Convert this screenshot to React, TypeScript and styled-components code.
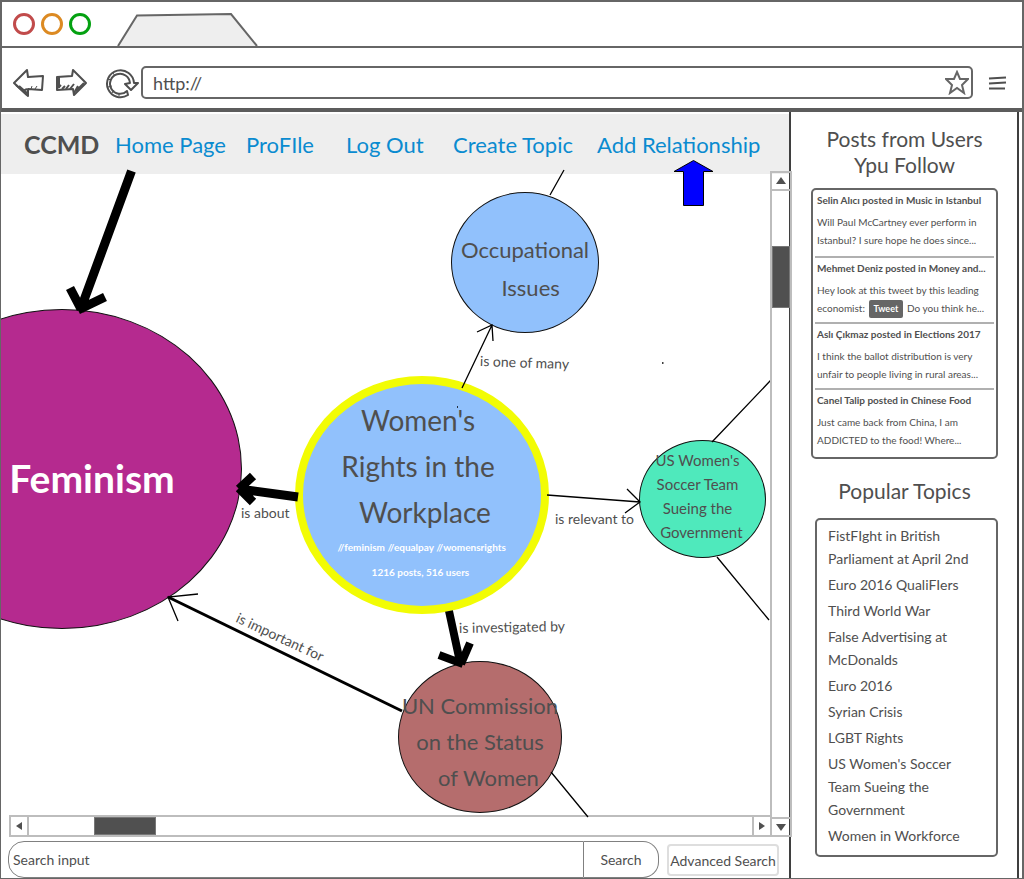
import React from "react";
import styled, { createGlobalStyle } from "styled-components";

const ink = "#4f4f4f";
const frame = "#666666";
const light = "#bdbdbd";
const face = "Lato, sans-serif";

const GlobalStyle = createGlobalStyle`
  *, *::before, *::after { box-sizing: border-box; }
  body { margin: 0; background: #fff; color: ${ink}; font-family: ${face}; }
  button, input { font: inherit; color: inherit; background: none; border: 0; padding: 0; margin: 0; outline: 0; }
  h1, h2, h3, p, ul { margin: 0; padding: 0; }
  ul { list-style: none; }
`;

const Window = styled.div`
  display: flex;
  flex-direction: column;
  min-height: 100vh;
  border: 2px solid ${frame};
  border-left-width: 1px;
  border-bottom-width: 1px;
`;

const TabStrip = styled.div`
  display: flex;
  align-items: center;
  height: 46px;
  padding-left: 11px;
  border-bottom: 2px solid ${frame};
  border-left: 1px solid ${frame};
`;

const Lights = styled.div`
  display: flex;
  gap: 6px;
`;

const Light = styled.button<{ $color: string }>`
  width: 22px;
  height: 22px;
  border: 3px solid ${(p) => p.$color};
  border-radius: 50%;
`;

const TabShape = styled.svg`
  display: block;
  align-self: flex-end;
  margin-left: 26px;
`;

const Toolbar = styled.div`
  display: flex;
  align-items: center;
  height: 64px;
  padding: 9px 15px 0 11px;
  border-bottom: 4px solid #5c5c5c;
  border-left: 1px solid ${frame};
`;

const IconButton = styled.button<{ $gap?: number }>`
  display: flex;
  margin-right: ${(p) => p.$gap ?? 0}px;
`;

const AddressBox = styled.div`
  display: flex;
  flex: 1;
  align-items: center;
  height: 33px;
  margin-right: 15px;
  padding: 0 2px 0 10px;
  border: 2px solid ${frame};
  border-radius: 5px;
`;

const AddressInput = styled.input`
  flex: 1;
  min-width: 0;
  font-size: 18px;
`;

const Body = styled.div`
  display: grid;
  flex: 1;
  grid-template-columns: minmax(0, 1fr) 230px;
  padding-right: 3px;
`;

const Main = styled.main`
  display: flex;
  flex-direction: column;
  min-width: 0;
  padding-top: 2px;
`;

const Nav = styled.nav`
  display: grid;
  grid-template-columns: 91px 131px 100px 107px 144px 1fr;
  align-items: center;
  height: 60px;
  padding-left: 23px;
  background: #eeeeee;
  white-space: nowrap;
`;

const Brand = styled.h1`
  font-size: 25px;
  font-weight: 700;
`;

const NavLink = styled.a`
  color: #0a8bd0;
  font-size: 22px;
  text-decoration: none;
`;

const Viewport = styled.div`
  display: grid;
  flex: 1;
  grid-template-columns: minmax(0, 1fr) 19px;
  grid-template-rows: minmax(641px, 1fr) 22px;
`;

const Canvas = styled.div`
  position: relative;
  overflow-x: clip;
`;

const Edges = styled.svg`
  position: absolute;
  top: 0;
  left: 0;
  overflow: visible;
  pointer-events: none;
`;

const Node = styled.div<{
  $x: number;
  $y: number;
  $w: number;
  $h: number;
  $fill: string;
  $ring?: string;
  $inset?: string;
}>`
  position: absolute;
  left: ${(p) => p.$x}px;
  top: ${(p) => p.$y}px;
  display: flex;
  flex-direction: column;
  align-items: center;
  justify-content: center;
  width: ${(p) => p.$w}px;
  height: ${(p) => p.$h}px;
  padding: ${(p) => p.$inset ?? "0"};
  border: ${(p) => p.$ring ?? "1px solid #111"};
  border-radius: 50%;
  background: ${(p) => p.$fill};
  white-space: pre;
`;

const NodeText = styled.p<{ $size: number; $line: number }>`
  font-size: ${(p) => p.$size}px;
  line-height: ${(p) => p.$line}px;
`;

const NodeTitle = styled(NodeText)`
  color: #fff;
  font-weight: 700;
`;

const NodeMeta = styled.p`
  color: #fff;
  font-size: 10px;
  font-weight: 700;
  line-height: 25px;
`;

const EdgeLabel = styled.span<{ $x: number; $y: number; $turn?: number }>`
  position: absolute;
  left: ${(p) => p.$x}px;
  top: ${(p) => p.$y}px;
  font-size: 14px;
  line-height: 20px;
  white-space: nowrap;
  transform: rotate(${(p) => p.$turn ?? 0}deg);
  transform-origin: left center;
`;

const HBar = styled.div`
  display: flex;
  margin-left: 8px;
  border: 2px solid ${light};
  border-right: 0;
`;

const VBar = styled.div`
  z-index: 1;
  display: flex;
  grid-column: 2;
  grid-row: 1 / 3;
  flex-direction: column;
  margin: -3px -3px 0 0;
  border: 2px solid ${light};
`;

const BarButton = styled.button<{ $side: "left" | "right" | "top" | "bottom" }>`
  display: flex;
  flex: none;
  align-items: center;
  justify-content: center;
  width: 18px;
  height: 18px;
  border-${(p) => p.$side}: 2px solid ${light};
`;

const BarTrack = styled.div<{ $vertical?: boolean }>`
  display: flex;
  flex: 1;
  flex-direction: ${(p) => (p.$vertical ? "column" : "row")};
  padding: ${(p) => (p.$vertical ? "55px 0 0" : "0 0 0 65px")};
`;

const Thumb = styled.div`
  flex: 0 0 62px;
  background: #505050;
  border: 1px solid #777;
`;

const SearchForm = styled.form`
  display: flex;
  align-items: flex-start;
  height: 41px;
  padding: 4px 10px 0 7px;
  font-size: 14px;
`;

const SearchInput = styled.input`
  flex: 1;
  min-width: 0;
  height: 37px;
  padding-left: 4px;
  border: 1px solid #808080;
  border-radius: 16px 0 0 16px;
`;

const SearchButton = styled.button`
  width: 75px;
  height: 37px;
  margin-right: 8px;
  border: 1px solid #808080;
  border-left: 0;
  border-radius: 0 16px 16px 0;
`;

const AdvancedButton = styled.button`
  width: 112px;
  height: 32px;
  margin-top: 3px;
  border: 2px solid #dedede;
  border-radius: 4px;
  white-space: nowrap;
`;

const Sidebar = styled.aside`
  padding: 14px 19px 16px 20px;
  border: solid #3f3f3f;
  border-width: 0 2px;
`;

const SideTitle = styled.h2`
  font-size: 21px;
  font-weight: 400;
  line-height: 26px;
  text-align: center;
`;

const PostList = styled.div`
  margin: 10px 0 19px;
  padding: 0 2px 3px;
  border: 2px solid ${frame};
  border-radius: 5px;
`;

const Post = styled.article`
  height: 66px;
  padding-left: 2px;
  white-space: nowrap;
  & + & { border-top: 2px solid #b0b0b0; }
`;

const PostTitle = styled.h3`
  margin-bottom: 3px;
  font-size: 10px;
  line-height: 20px;
`;

const PostLine = styled.p`
  font-size: 10px;
  line-height: 18px;
`;

const TweetButton = styled.button`
  width: 34px;
  height: 18px;
  margin: 0 4px;
  border-radius: 2px;
  background: #666;
  color: #fff;
  font-size: 9px;
  font-weight: 700;
  line-height: 18px;
`;

const TopicList = styled.ul`
  display: flex;
  flex-direction: column;
  gap: 3px;
  margin: 14px 0 0 4px;
  padding: 4px 11px 8px;
  border: 2px solid ${frame};
  border-radius: 5px;
  font-size: 14px;
  line-height: 23px;
  white-space: pre-line;
`;

const links = ["Home Page", "ProFIle", "Log Out", "Create Topic", "Add Relationship"];

const topics = [
  "FistFIght in British\nParliament at April 2nd",
  "Euro 2016 QualiFIers",
  "Third World War",
  "False Advertising at\nMcDonalds",
  "Euro 2016",
  "Syrian Crisis",
  "LGBT Rights",
  "US Women's Soccer\nTeam Sueing the\nGovernment",
  "Women in Workforce",
];

const posts: { title: string; lines: React.ReactNode[] }[] = [
  {
    title: "Selin Alıcı posted in Music in Istanbul",
    lines: ["Will Paul McCartney ever perform in", "Istanbul? I sure hope he does since..."],
  },
  {
    title: "Mehmet Deniz posted in Money and...",
    lines: [
      "Hey look at this tweet by this leading",
      <>economist:<TweetButton type="button">Tweet</TweetButton>Do you think he...</>,
    ],
  },
  {
    title: "Aslı Çıkmaz posted in Elections 2017",
    lines: ["I think the ballot distribution is very", "unfair to people living in rural areas..."],
  },
  {
    title: "Canel Talip posted in Chinese Food",
    lines: ["Just came back from China, I am", "ADDICTED to the food! Where..."],
  },
];

const Triangle = ({ d }: { d: string }) => (
  <svg width="10" height="10" aria-hidden="true">
    <path d={d} fill="#505050" />
  </svg>
);

export default function App() {
  return (
    <>
      <GlobalStyle />
      <Window>
        <TabStrip>
          <Lights>
            <Light type="button" aria-label="Close" $color="#c14b4b" />
            <Light type="button" aria-label="Minimize" $color="#dc8a22" />
            <Light type="button" aria-label="Maximize" $color="#04a111" />
          </Lights>
          <TabShape width="142" height="33" aria-hidden="true">
            <path d="M1 33 L20 2.5 L114 1 L140 33" fill="#eee" stroke={frame} strokeWidth="2" />
          </TabShape>
        </TabStrip>
        <Toolbar>
          <IconButton type="button" aria-label="Back" $gap={11}>
            <svg width="32" height="30" fill="none" stroke={ink} strokeWidth="2" strokeLinejoin="round">
              <path d="M1 15 L14 2 L15 9 L30 8 L29 22 L15 21 L15 28 Z" />
              <path d="M3 17 L14 27 M6 18 L14 25 M10 23 L14 21" />
              <path d="M18 21 L19 18 M22 21 L24 18" strokeWidth="1" />
            </svg>
          </IconButton>
          <IconButton type="button" aria-label="Forward" $gap={17}>
            <svg width="32" height="30" fill="none" stroke={ink} strokeWidth="2" strokeLinejoin="round">
              <path d="M1 9 L16 8 L17 2 L30 15 L18 27 L17 21 L1 22 Z" />
              <path d="M3 9 V20 M2 20 L5 17 M6 21 L9 18 M10 21 L13 17 M14 21 L18 16 M18 25 L22 18 M20 23 L28 15" />
            </svg>
          </IconButton>
          <IconButton type="button" aria-label="Reload" $gap={2}>
            <svg width="34" height="32" fill="none" stroke={ink} strokeWidth="2" strokeLinejoin="round">
              <path d="M29 16 A13.5 13.5 0 1 0 23 28 L22 24 A10 10 0 1 1 25 16 L20 17 L26 23 L33 16 Z" />
              <path d="M3 12 L6 13 M3 20 L7 19 M7 26 L9 23 M14 29 V26 M8 6 L10 9" strokeWidth="1" />
            </svg>
          </IconButton>
          <AddressBox>
            <AddressInput aria-label="Address" defaultValue="http://" />
            <IconButton type="button" aria-label="Bookmark">
              <svg width="24" height="25" fill="none" stroke={frame} strokeWidth="2">
                <path d="M12 2 L15 9 L23 9 L17 15 L19 23 L12 18 L5 23 L7 15 L1 9 L9 9 Z" />
              </svg>
            </IconButton>
          </AddressBox>
          <IconButton type="button" aria-label="Menu">
            <svg width="19" height="14" stroke={ink} strokeWidth="2">
              <path d="M1 2.5 L18 1.5 M1 7.5 L18 6.5 M1 12.5 H17" />
            </svg>
          </IconButton>
        </Toolbar>
        <Body>
          <Main>
            <Nav>
              <Brand>CCMD</Brand>
              {links.map((l) => (
                <NavLink key={l} href="#">{l}</NavLink>
              ))}
            </Nav>
            <Viewport>
              <Canvas>
                <Node $x={-119} $y={135} $w={360} $h={320} $fill="#b52a8f" $inset="18px 0 0 60px">
                  <NodeTitle $size={39} $line={46}>Feminism</NodeTitle>
                </Node>
                <Node $x={450} $y={18} $w={148} $h={141} $fill="#91c1fc" $inset="12px 0 0">
                  <NodeText $size={22} $line={38}>Occupational</NodeText>
                  <NodeText $size={22} $line={38}>{"  Issues"}</NodeText>
                </Node>
                <Node $x={294} $y={202} $w={254} $h={238} $fill="#91c1fc" $ring="8px solid #f2fc04" $inset="0 8px 8px 0">
                  <NodeText $size={28} $line={46}>Women's</NodeText>
                  <NodeText $size={28} $line={46}>Rights in the</NodeText>
                  <NodeText $size={28} $line={46}>{"  Workplace"}</NodeText>
                  <NodeMeta>{"   //feminism //equalpay //womensrights"}</NodeMeta>
                  <NodeMeta>{"  1216 posts, 516 users"}</NodeMeta>
                </Node>
                <Node $x={638} $y={266} $w={127} $h={118} $fill="#4fe9bc" $inset="0 10px 6px 0">
                  <NodeText $size={15} $line={24}>US Women's</NodeText>
                  <NodeText $size={15} $line={24}>Soccer Team</NodeText>
                  <NodeText $size={15} $line={24}>Sueing the</NodeText>
                  <NodeText $size={15} $line={24}>{"  Government"}</NodeText>
                </Node>
                <Node $x={397} $y={487} $w={164} $h={152} $fill="#b56d6d" $inset="10px 0 0">
                  <NodeText $size={22} $line={36}>UN Commission</NodeText>
                  <NodeText $size={22} $line={36}>on the Status</NodeText>
                  <NodeText $size={22} $line={36}>{"   of Women"}</NodeText>
                </Node>
                <Edges width="770" height="641" viewBox="1 174 770 641" fill="none" stroke="#000" aria-hidden="true">
                  <path d="M131.500 171 L80 311 M70 288 L81 309 M105 297 L78 310" strokeWidth="9" />
                  <path d="M298 497 L239 489 M253 476 L239 489 M253 502 L239 488" strokeWidth="9" />
                  <path d="M449 611 L460 662 M439 655 L463 664 M470 643 L461 664" strokeWidth="8" />
                  <path d="M402 711 L168 597" strokeWidth="3" />
                  <path d="M198 594 L168 597 L178 621 M462 388 L492 325 M477 332 L492 325 L493 341 M550 195 L564 170 M547 495 L640 502 M627 489 L640 502 L625 513 M712 442 L771 380 M717 557 L769 620 M551 772 L588 817" strokeWidth="1.3" />
                  <path d="M662 363 h1.500 M457 407 h1" strokeWidth="1.5" />
                  <path d="M693.500 160.500 L713 171.500 H703.500 V205.500 H683.500 V171.500 H674 Z" fill="#00f" strokeWidth="1" />
                </Edges>
                <EdgeLabel $x={240} $y={329}>is about</EdgeLabel>
                <EdgeLabel $x={479} $y={177} $turn={2}>is one of many</EdgeLabel>
                <EdgeLabel $x={554} $y={335}>is relevant to</EdgeLabel>
                <EdgeLabel $x={458} $y={444} $turn={-1}>is investigated by</EdgeLabel>
                <EdgeLabel $x={236} $y={433} $turn={25}>is important for</EdgeLabel>
              </Canvas>
              <VBar>
                <BarButton type="button" aria-label="Scroll up" $side="bottom"><Triangle d="M0 8 L5 1 L10 8 Z" /></BarButton>
                <BarTrack $vertical><Thumb /></BarTrack>
                <BarButton type="button" aria-label="Scroll down" $side="top"><Triangle d="M0 2 L5 9 L10 2 Z" /></BarButton>
              </VBar>
              <HBar>
                <BarButton type="button" aria-label="Scroll left" $side="right"><Triangle d="M8 1 L2 5 L8 9 Z" /></BarButton>
                <BarTrack><Thumb /></BarTrack>
                <BarButton type="button" aria-label="Scroll right" $side="left"><Triangle d="M2 1 L8 5 L2 9 Z" /></BarButton>
              </HBar>
            </Viewport>
            <SearchForm onSubmit={(e) => e.preventDefault()}>
              <SearchInput aria-label="Search" defaultValue="Search input" />
              <SearchButton type="submit">Search</SearchButton>
              <AdvancedButton type="button">Advanced Search</AdvancedButton>
            </SearchForm>
          </Main>
          <Sidebar>
            <SideTitle>Posts from Users<br />Ypu Follow</SideTitle>
            <PostList>
              {posts.map((p) => (
                <Post key={p.title}>
                  <PostTitle>{p.title}</PostTitle>
                  {p.lines.map((line, i) => <PostLine key={i}>{line}</PostLine>)}
                </Post>
              ))}
            </PostList>
            <SideTitle>Popular Topics</SideTitle>
            <TopicList>
              {topics.map((t) => <li key={t}>{t}</li>)}
            </TopicList>
          </Sidebar>
        </Body>
      </Window>
    </>
  );
}
